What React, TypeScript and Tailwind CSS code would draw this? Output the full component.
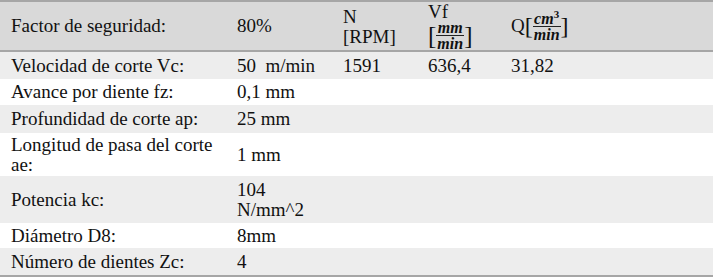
import React from 'react';

const serif = { fontFamily: '"Liberation Serif", "Times New Roman", serif' };

function Frac({ top, bottom }: { top: React.ReactNode; bottom: React.ReactNode }) {
  return (
    <span className="inline-flex flex-col items-center align-middle italic font-bold text-[16px] leading-[13px]">
      <span className="px-[1px] pb-[1px]">{top}</span>
      <span className="w-full border-t border-[#222]" />
      <span className="px-[1px] pt-[1px]">{bottom}</span>
    </span>
  );
}

const rows: { label: React.ReactNode; value: React.ReactNode; extra?: string[]; h: string; bg: string }[] = [
  { label: 'Velocidad de corte Vc:', value: '50  m/min', extra: ['1591', '636,4', '31,82'], h: 'h-[27px]', bg: 'bg-[#ededed]' },
  { label: 'Avance por diente fz:', value: '0,1 mm', h: 'h-[26px]', bg: 'bg-white' },
  { label: 'Profundidad de corte ap:', value: '25 mm', h: 'h-[28px]', bg: 'bg-[#ededed]' },
  { label: <>Longitud de pasa del corte<br />ae:</>, value: '1 mm', h: 'h-[43px]', bg: 'bg-white' },
  { label: 'Potencia kc:', value: <>104<br />N/mm^2</>, h: 'h-[47px]', bg: 'bg-[#ededed]' },
  { label: 'Diámetro D8:', value: '8mm', h: 'h-[25px]', bg: 'bg-white' },
  { label: 'Número de dientes Zc:', value: '4', h: 'h-[27px]', bg: 'bg-[#ededed]' },
];

const cols = 'grid grid-cols-[226px_106px_85px_83px_1fr]';

export default function App() {
  return (
    <div className="w-[714px] h-[280px] bg-white text-[#111]" style={serif}>
      <div className="w-[713px] border-t-2 border-b-2 border-[#a6a6a6] text-[19px] leading-[20px]">
        {/* header */}
        <div className={`${cols} h-[50px] bg-[#d9d9d9] border-b-2 border-[#a6a6a6]`}>
          <div className="pl-[11px] flex items-center">Factor de seguridad:</div>
          <div className="pl-[11px] flex items-center">80%</div>
          <div className="pl-[11px] pt-[5px]">N<br />[RPM]</div>
          <div className="pl-[11px] flex flex-col items-start">
            <span className="leading-[18px] pt-[1px]">Vf</span>
            <span className="flex items-center">
              <span className="text-[25px] leading-[28px]">[</span>
              <Frac top="mm" bottom="min" />
              <span className="text-[25px] leading-[28px]">]</span>
            </span>
          </div>
          <div className="pl-[11px] flex items-center">
            <span>Q</span>
            <span className="text-[24px] leading-[26px]">[</span>
            <Frac top={<>cm<sup className="text-[11px] not-italic font-bold">3</sup></>} bottom="min" />
            <span className="text-[24px] leading-[26px]">]</span>
          </div>
        </div>
        {rows.map((r, i) => (
          <div key={i} className={`${cols} ${r.h} ${r.bg} items-center`}>
            <div className="pl-[11px]">{r.label}</div>
            <div className="pl-[11px] whitespace-pre">{r.value}</div>
            {r.extra ? r.extra.map((e) => <div key={e} className="pl-[11px]">{e}</div>) : null}
          </div>
        ))}
      </div>
    </div>
  );
}
